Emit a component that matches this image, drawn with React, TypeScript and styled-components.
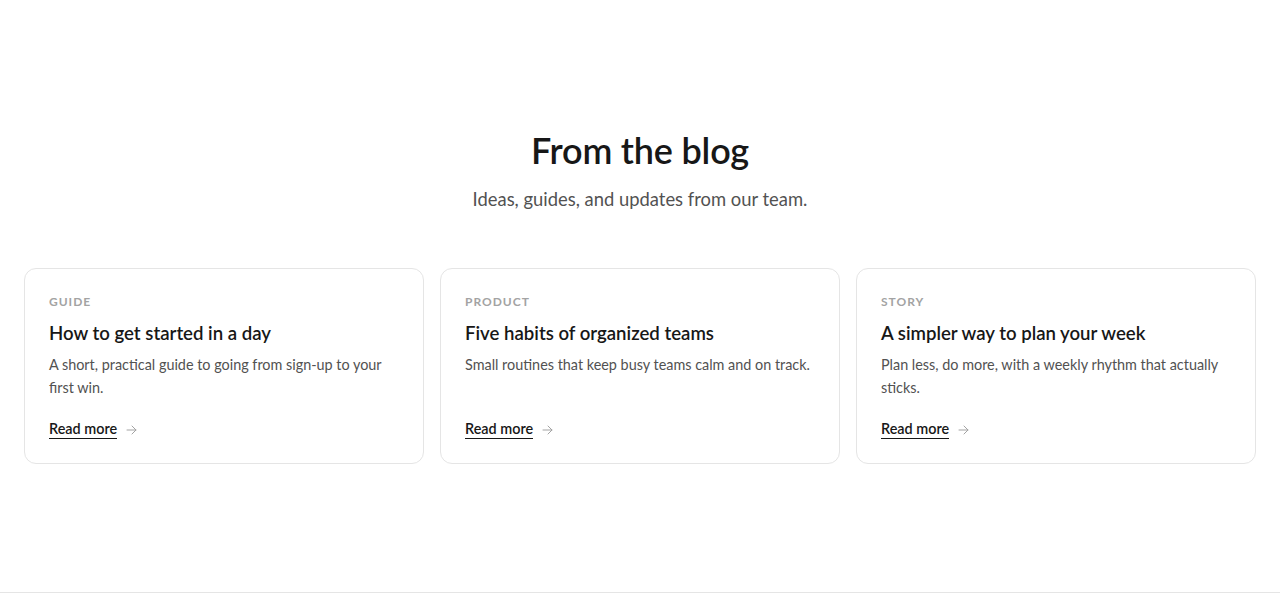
import React from "react";
import styled, { createGlobalStyle } from "styled-components";

const GlobalStyle = createGlobalStyle`
  html, body {
    margin: 0;
    padding: 0;
    background: #ffffff;
    font-family: Lato, "Noto Sans", sans-serif;
    color: #171717;
  }
`;

const Page = styled("div")`
  min-height: 593px;
  border-bottom: 1px solid #e5e5e5;
  box-sizing: border-box;
`;

const Section = styled("section")`
  padding: 128px 24px 0;
`;

const Header = styled("header")`
  text-align: center;
  margin-bottom: 56px;
`;

const Heading = styled("h2")`
  margin: 0;
  font-size: 36px;
  line-height: 44px;
  font-weight: 600;
  letter-spacing: -0.2px;
  color: #171717;
`;

const Subtitle = styled("p")`
  margin: 14px 0 0;
  font-size: 18.4px;
  line-height: 26px;
  color: #525252;
`;

const CardGrid = styled("div")`
  display: grid;
  grid-template-columns: repeat(3, 1fr);
  gap: 16px;
`;

const Card = styled("article")`
  border: 1px solid #e5e5e5;
  border-radius: 12px;
  padding: 24px;
  display: flex;
  flex-direction: column;
  min-height: 196px;
  box-sizing: border-box;
`;

const Eyebrow = styled("span")`
  font-size: 12px;
  line-height: 18px;
  font-weight: 700;
  letter-spacing: 1px;
  text-transform: uppercase;
  color: #a3a3a3;
`;

const CardTitle = styled("h3")`
  margin: 9px 0 0;
  font-size: 18.6px;
  line-height: 26px;
  font-weight: 600;
  color: #171717;
`;

const CardText = styled("p")`
  margin: 7px 0 0;
  font-size: 14.4px;
  line-height: 23px;
  color: #525252;
  flex: 1;
`;

const ReadMore = styled("a")`
  margin-top: 20px;
  display: inline-flex;
  align-items: center;
  gap: 9px;
  font-size: 14.4px;
  line-height: 20px;
  font-weight: 600;
  color: #171717;
  text-decoration: none;
  align-self: flex-start;
`;

const LinkLabel = styled("span")`
  border-bottom: 1px solid #171717;
  line-height: 18px;
`;

const Arrow = () => (
  <svg width="11" height="10" viewBox="0 0 11 10" fill="none">
    <path
      d="M1 5h9M6 1l4 4-4 4"
      stroke="#a3a3a3"
      strokeWidth="1"
      strokeLinecap="round"
      strokeLinejoin="round"
    />
  </svg>
);

const posts = [
  {
    tag: "Guide",
    title: "How to get started in a day",
    text: "A short, practical guide to going from sign-up to your first win.",
  },
  {
    tag: "Product",
    title: "Five habits of organized teams",
    text: "Small routines that keep busy teams calm and on track.",
  },
  {
    tag: "Story",
    title: "A simpler way to plan your week",
    text: "Plan less, do more, with a weekly rhythm that actually sticks.",
  },
];

const App: React.FC = () => (
  <Page>
    <GlobalStyle />
    <Section>
      <Header>
        <Heading>From the blog</Heading>
        <Subtitle>Ideas, guides, and updates from our team.</Subtitle>
      </Header>
      <CardGrid>
        {posts.map(({ tag, title, text }) => (
          <Card key={tag}>
            <Eyebrow>{tag}</Eyebrow>
            <CardTitle>{title}</CardTitle>
            <CardText>{text}</CardText>
            <ReadMore href="#">
              <LinkLabel>Read more</LinkLabel>
              <Arrow />
            </ReadMore>
          </Card>
        ))}
      </CardGrid>
    </Section>
  </Page>
);

export default App;
